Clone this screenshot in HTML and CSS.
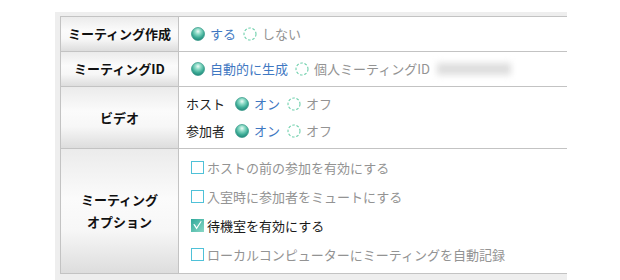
FILE: index.html
```html
<!DOCTYPE html>
<html lang="ja">
<head>
<meta charset="utf-8">
<link rel="stylesheet" href="styles.css">
</head>
<body>
<svg width="0" height="0" class="defs" aria-hidden="true">
  <defs>
    <radialGradient id="ball" cx="0.5" cy="0.3" r="0.7">
      <stop offset="0" stop-color="#f0fbf7"/>
      <stop offset="0.3" stop-color="#8fdcc8"/>
      <stop offset="0.7" stop-color="#3aaa94"/>
      <stop offset="1" stop-color="#23857a"/>
    </radialGradient>
    <linearGradient id="chk" x1="0" y1="0" x2="1" y2="1">
      <stop offset="0" stop-color="#2fa89a"/>
      <stop offset="1" stop-color="#8ad8c6"/>
    </linearGradient>
  </defs>
</svg>
<div class="panel">
  <div class="form">
    <div class="th">ミーティング作成</div>
    <div class="td">
      <div class="line">
        <span class="opt on"><svg class="radio" viewBox="0 0 14 14"><circle cx="7" cy="7" r="6.5" fill="url(#ball)" stroke="#2f9584" stroke-width="0.7"/></svg>する</span>
        <span class="opt off"><svg class="radio" viewBox="0 0 14 14"><circle cx="7" cy="7" r="6" fill="none" stroke="#6fd0ac" stroke-width="1.1" stroke-dasharray="2.6 1.7"/></svg>しない</span>
      </div>
    </div>
    <div class="th">ミーティングID</div>
    <div class="td">
      <div class="line">
        <span class="opt on"><svg class="radio" viewBox="0 0 14 14"><circle cx="7" cy="7" r="6.5" fill="url(#ball)" stroke="#2f9584" stroke-width="0.7"/></svg>自動的に生成</span>
        <span class="opt off"><svg class="radio" viewBox="0 0 14 14"><circle cx="7" cy="7" r="6" fill="none" stroke="#6fd0ac" stroke-width="1.1" stroke-dasharray="2.6 1.7"/></svg>個人ミーティングID</span>
        <span class="blurred"></span>
      </div>
    </div>
    <div class="th">ビデオ</div>
    <div class="td tall">
      <div class="line l27">
        <span class="who">ホスト</span>
        <span class="opt on"><svg class="radio" viewBox="0 0 14 14"><circle cx="7" cy="7" r="6.5" fill="url(#ball)" stroke="#2f9584" stroke-width="0.7"/></svg>オン</span>
        <span class="opt off"><svg class="radio" viewBox="0 0 14 14"><circle cx="7" cy="7" r="6" fill="none" stroke="#6fd0ac" stroke-width="1.1" stroke-dasharray="2.6 1.7"/></svg>オフ</span>
      </div>
      <div class="line l27">
        <span class="who">参加者</span>
        <span class="opt on"><svg class="radio" viewBox="0 0 14 14"><circle cx="7" cy="7" r="6.5" fill="url(#ball)" stroke="#2f9584" stroke-width="0.7"/></svg>オン</span>
        <span class="opt off"><svg class="radio" viewBox="0 0 14 14"><circle cx="7" cy="7" r="6" fill="none" stroke="#6fd0ac" stroke-width="1.1" stroke-dasharray="2.6 1.7"/></svg>オフ</span>
      </div>
    </div>
    <div class="th two">ミーティング<br>オプション</div>
    <div class="td tall">
      <div class="line l29 check off"><span class="ebox"></span>ホストの前の参加を有効にする</div>
      <div class="line l29 check off"><span class="ebox"></span>入室時に参加者をミュートにする</div>
      <div class="line l29 check dark"><svg class="box" viewBox="0 0 13 13"><rect x="0" y="0" width="13" height="13" fill="url(#chk)"/><path d="M2.2 5.2 L5.6 10.6 L10.8 2.2 L9.6 2.2 L5.6 8.2 L3.8 5.2 Z" fill="#fff"/></svg>待機室を有効にする</div>
      <div class="line l29 check off"><span class="ebox"></span>ローカルコンピューターにミーティングを自動記録</div>
    </div>
  </div>
</div>
</body>
</html>
```
FILE: styles.css
```css
html, body {
  margin: 0;
  padding: 0;
  background: #fff;
}
body {
  font-family: "Noto Sans CJK JP", "Noto Sans", sans-serif;
  font-size: 13px;
  color: #222;
}
.defs {
  position: absolute;
  width: 0;
  height: 0;
}
.panel {
  margin: 12px 0 0 55px;
  padding: 4px 0 12px 5px;
  width: 507px;
  background: #eeeeee;
}
.form {
  display: grid;
  grid-template-columns: 118px 388px;
  grid-template-rows: 35px 35px 62px 125px;
  border-top: 1px solid #c3c3c3;
  border-left: 1px solid #c3c3c3;
  background: #fff;
}
.th, .td {
  box-sizing: border-box;
  border-bottom: 1px solid #c3c3c3;
  display: flex;
  flex-direction: column;
  justify-content: center;
}
.th {
  border-right: 1px solid #c3c3c3;
  align-items: center;
  text-align: center;
  font-weight: bold;
  color: #111;
  line-height: 22px;
  background: linear-gradient(to bottom, #ebebeb 0%, #fbfbfb 40%, #f7f7f7 65%, #dddddd 100%);
}
.td {
  padding-left: 7px;
  background: #fff;
}
.line {
  display: flex;
  align-items: center;
  line-height: 20px;
  white-space: nowrap;
}
.l27 { height: 27px; }
.l29 { height: 29px; }
.opt {
  display: inline-flex;
  align-items: center;
  margin-right: 7px;
}
.opt.on { color: #3f78c2; }
.opt.off { color: #939393; }
.radio {
  width: 14px;
  height: 14px;
  margin-right: 5px;
  flex: none;
}
.line > .opt:first-child .radio { margin-left: 5px; }
.who {
  color: #222;
  margin-right: 10px;
}
.blurred {
  display: inline-block;
  width: 74px;
  height: 12px;
  background: #dedede;
  filter: blur(3px);
}
.check.off { color: #939393; }
.check.dark { color: #1a1a1a; }
.box {
  width: 13px;
  height: 13px;
  margin-left: 5px;
  margin-right: 3px;
  flex: none;
}
.ebox {
  box-sizing: border-box;
  width: 13px;
  height: 13px;
  margin-left: 5px;
  margin-right: 3px;
  border: 1px solid #4fc1d8;
  background: #fff;
  flex: none;
}
```
